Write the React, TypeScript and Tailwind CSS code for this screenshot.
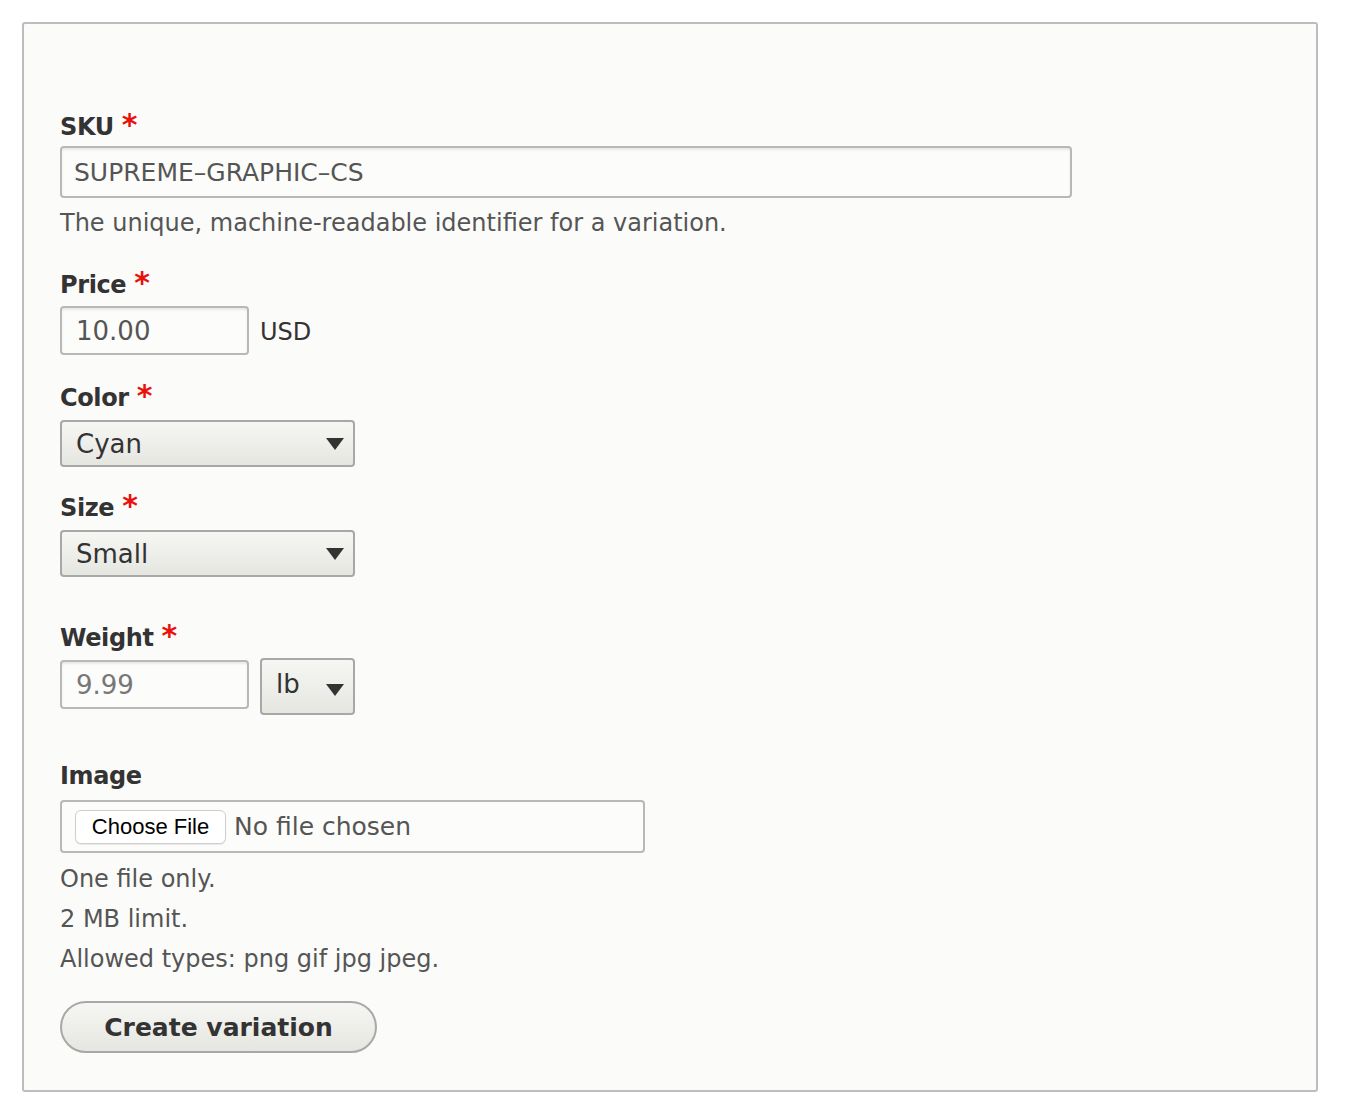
import React from "react";

const font = { fontFamily: '"DejaVu Sans", "Noto Sans", sans-serif' };

function Label({ text, required = true }: { text: string; required?: boolean }) {
  return (
    <div className="h-[30px] leading-[30px] text-[24px] font-bold text-[#333] whitespace-nowrap tracking-[-0.4px]">
      {text}
      {required && <span className="ml-[8px] text-[30px] font-bold text-[#e8120c]">*</span>}
    </div>
  );
}

function Arrow() {
  return (
    <svg width="18" height="12" viewBox="0 0 18 12" className="shrink-0">
      <polygon points="0,0 18,0 9,12" fill="#333" />
    </svg>
  );
}

export default function App() {
  return (
    <div className="min-h-[1118px] bg-white pt-[22px] pl-[22px]" style={font}>
      <div className="w-[1296px] h-[1070px] border-2 border-[#bdbdbd] rounded-[3px] bg-[#fbfbfa] pl-[36px] pt-[86px]">
        <Label text="SKU" />
        <div className="mt-[6px] w-[1012px] h-[52px] border-2 border-[#b8b8b8] rounded-[4px] bg-[#fcfcfa] shadow-[inset_0_2px_2px_rgba(0,0,0,0.08)] flex items-center pl-[12px] text-[25px] text-[#555]">
          <span className="relative top-[1px]">SUPREME–GRAPHIC–CS</span>
        </div>
        <div className="mt-[10px] h-[30px] leading-[30px] text-[24px] text-[#555]">
          The unique, machine-readable identifier for a variation.
        </div>

        <div className="mt-[30px]">
          <Label text="Price" />
        </div>
        <div className="mt-[8px] flex items-center gap-[11px]">
          <div className="w-[189px] h-[49px] border-2 border-[#b8b8b8] rounded-[4px] bg-[#fcfcfa] shadow-[inset_0_2px_2px_rgba(0,0,0,0.08)] flex items-center pl-[14px] text-[26px] text-[#555]">
            <span className="relative top-[1px]">10.00</span>
          </div>
          <span className="text-[24px] text-[#333] relative top-[1px]">USD</span>
        </div>

        <div className="mt-[26px]">
          <Label text="Color" />
        </div>
        <div className="mt-[9px] w-[295px] h-[47px] border-2 border-[#a8a8a8] rounded-[4px] bg-gradient-to-b from-[#f6f6f3] to-[#e6e6e1] flex items-center justify-between pl-[14px] pr-[9px] text-[26px] text-[#333]">
          <span className="relative top-[1px]">Cyan</span>
          <Arrow />
        </div>

        <div className="mt-[24px]">
          <Label text="Size" />
        </div>
        <div className="mt-[9px] w-[295px] h-[47px] border-2 border-[#a8a8a8] rounded-[4px] bg-gradient-to-b from-[#f6f6f3] to-[#e6e6e1] flex items-center justify-between pl-[14px] pr-[9px] text-[26px] text-[#333]">
          <span className="relative top-[1px]">Small</span>
          <Arrow />
        </div>

        <div className="mt-[44px]">
          <Label text="Weight" />
        </div>
        <div className="mt-[7px] flex items-start gap-[11px]">
          <div className="mt-[2px] w-[189px] h-[49px] border-2 border-[#b8b8b8] rounded-[4px] bg-[#fcfcfa] shadow-[inset_0_2px_2px_rgba(0,0,0,0.08)] flex items-center pl-[14px] text-[26px] text-[#777]">
            <span className="relative top-[1px]">9.99</span>
          </div>
          <div className="w-[95px] h-[57px] border-2 border-[#a8a8a8] rounded-[4px] bg-gradient-to-b from-[#f6f6f3] to-[#e6e6e1] flex justify-between pl-[14px] pr-[9px] text-[26px] text-[#333]">
            <span className="mt-[5px]">lb</span>
            <span className="mt-[24px]">
              <Arrow />
            </span>
          </div>
        </div>

        <div className="mt-[46px]">
          <Label text="Image" required={false} />
        </div>
        <div className="mt-[9px] w-[585px] h-[53px] border-2 border-[#b8b8b8] rounded-[4px] bg-[#fcfcfa] flex items-center pl-[13px]">
          <div
            className="h-[34px] w-[151px] bg-white border border-[#cfcfcf] rounded-[6px] flex items-center justify-center text-[22px] text-black shadow-[0_1px_1px_rgba(0,0,0,0.08)]"
            style={{ fontFamily: '"Liberation Sans", Arial, sans-serif' }}
          >
            Choose File
          </div>
          <span className="ml-[8px] text-[25px] text-[#555]">No file chosen</span>
        </div>

        <div className="mt-[6px] text-[24px] text-[#555]">
          <div className="h-[40px] leading-[40px]">One file only.</div>
          <div className="h-[40px] leading-[40px]">2 MB limit.</div>
          <div className="h-[40px] leading-[40px]">Allowed types: png gif jpg jpeg.</div>
        </div>

        <div className="mt-[22px] w-[317px] h-[52px] border-2 border-[#a8a8a8] rounded-full bg-gradient-to-b from-[#f6f6f3] to-[#e6e6e1] flex items-center justify-center text-[25px] font-bold text-[#333]">
          <span className="relative top-[1px]">Create variation</span>
        </div>
      </div>
    </div>
  );
}
